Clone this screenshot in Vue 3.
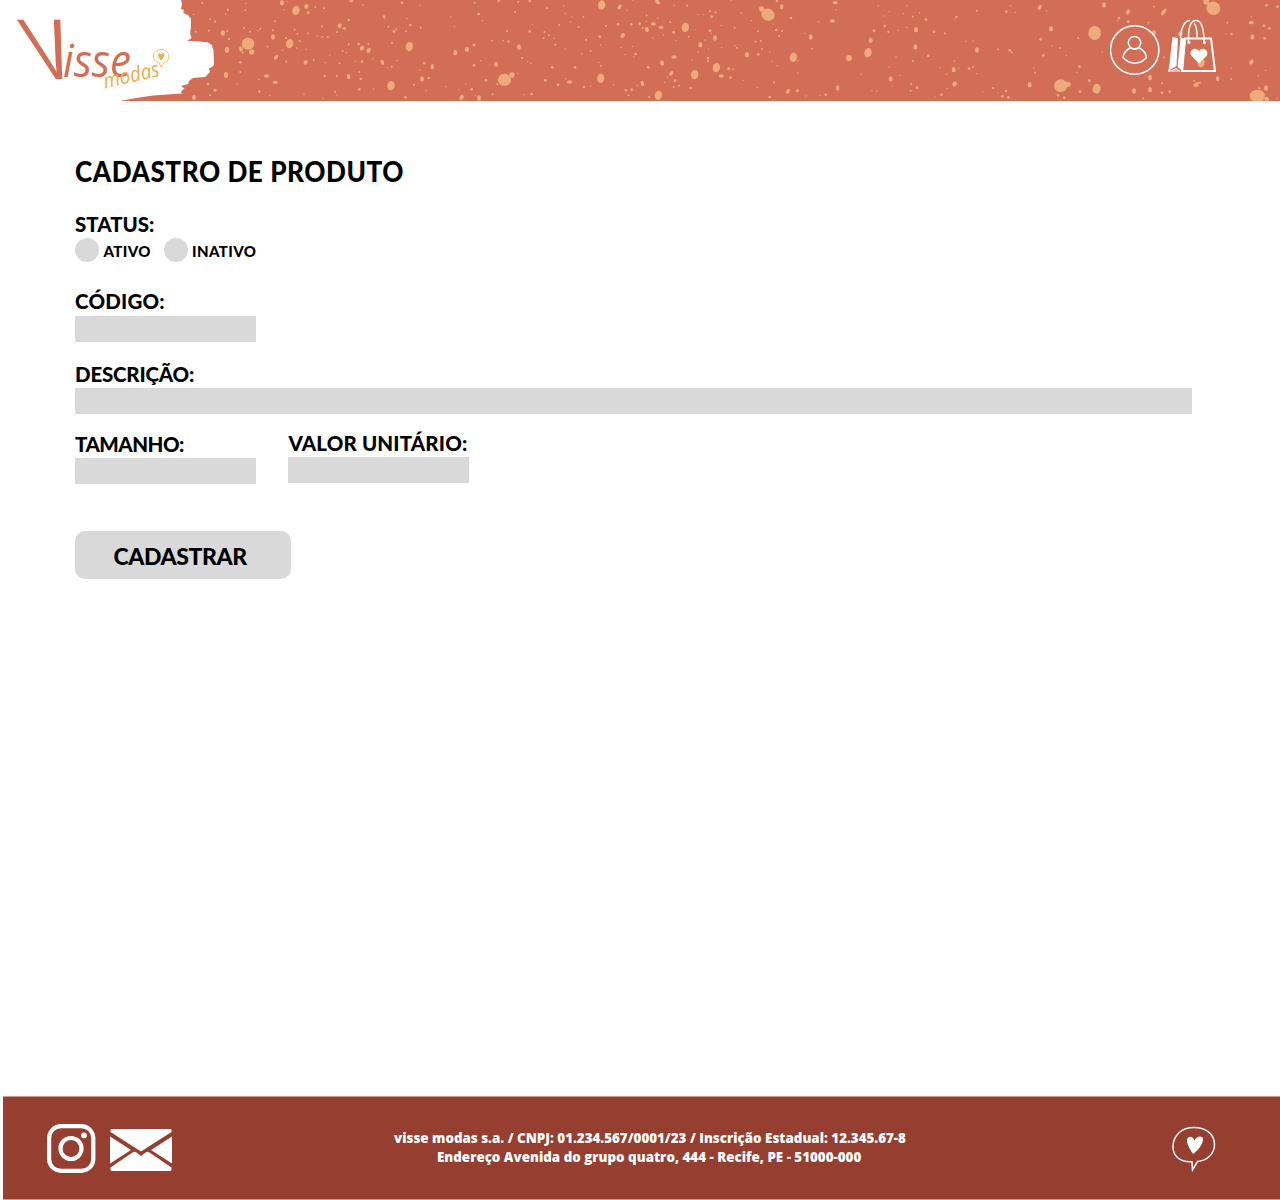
<script setup>
// Paint specks of the banner, one list per section: [x, y, rx, ry, tilt] in thirds of a pixel
const d = (list) => list.map(([x, y, rx, ry, t]) => ({ x, y, rx, ry: ry ?? rx, t: t ?? 0 }))
const sections = [
  { at: 0, dots: d([
    [607,9,3],[550,38,3],[581,43,2],[683,29,3],[677,43,2],[645,65,3],[631,57,2],[587,95,3],[572,97,2],[627,92,3],[669,99,6,8],[682,93,3],[687,117,3],[681,149,6,9],[678,225,6,9],[624,252,4],[645,271,4],[630,286,3],[582,292,6,8],
  ]) },
  { at: 210, dots: d([
    [216,8,6,8],[233,5,2],[108,10,2],[106,31,3],[53,29,3],[47,42,2],[222,29,2],[258,31,11,14,10],[289,19,6,8],[316,21,3],[295,38,4],[342,25,3],[424,2,6,5],[459,15,2],[576,8,4],[629,16,2],[794,8,3],[866,2,4],[15,64,3],[0,57,2],[195,64,3],[102,84,3],[120,95,3],[151,86,3],[144,92,2],[189,91,3],[38,99,6,8],[52,94,3],[57,117,3],[189,111,6,8],[228,114,3],[254,89,3],[262,102,3],[294,100,3],[336,79,3],[322,108,2],[337,111,3],[353,111,3],[389,77,6,7,30],[403,85,5,4],[381,96,3],[416,60,4],[522,50,4],[525,57,2],[535,80,3],[552,94,4],[559,88,3],[588,94,3],[601,75,4],[591,56,2],[632,83,3],[722,51,2],[733,80,2],[806,42,4],[817,62,2],[891,94,3],[846,122,3],[895,124,3],[879,122,2],[114,131,19,18],[125,156,8],[93,147,6,8],[98,158,3],[239,131,11,14,10],[269,123,3],[173,140,3],[218,150,2],[260,144,2],[288,148,2],[50,150,6,8],[91,187,4],[91,216,3],[198,172,5,8,40],[229,185,3],[287,187,6,7,35],[311,180,3],[346,188,2],[359,165,2],[389,190,3],[398,153,3],[409,158,2],[416,133,3],[446,132,4],[456,144,6,8,30],[476,151,6,8,30],[475,132,3],[546,129,3],[598,140,11,14,8],[736,158,6,8],[771,148,6,8],[792,135,5,4],[812,182,2],[792,196,4],[858,193,6,8],[436,184,2],[456,185,4],[488,176,2],[517,187,5,8,-20],[545,200,3],[532,203,2],[561,182,2],[643,190,4],[667,200,5,8],[630,210,2],[636,237,6,8],[656,234,4],[612,254,3],[648,272,2],[48,225,6,8],[170,228,8,5],[147,239,2],[196,247,8,5],[80,251,2],[15,271,4],[1,286,2],[148,275,4],[179,286,2],[282,282,2],[339,295,2],[344,228,4],[381,228,3],[375,275,3],[381,285,2],[416,230,5,8,-10],[448,216,3],[452,237,4],[448,268,4],[491,267,2],[543,257,11,14,8],[586,292,4],[708,260,2],[746,268,2],[755,292,6,8,30],[767,251,2],[785,268,4],[796,286,2],[807,294,6,8],[828,241,4],[862,253,3],[848,283,3],[883,239,19,18],
  ]) },
  { at: 500, dots: d([
    [55,6,3],[89,3,4],[141,25,3],[191,18,2],[45,36,3],[305,15,11,14,10],[359,21,5,8,35],[381,30,2],[471,4,6,5],[475,9,6,4],[398,0,2],[522,16,2],[561,17,3],[694,1,2],[196,40,2],[250,50,3],[217,51,2],[212,66,2],[236,81,3],[177,75,3],[97,74,2],[21,94,3],[89,94,4],[133,97,3],[147,106,3],[131,114,3],[162,115,2],[166,134,3],[9,122,2],[26,125,3],[57,141,6,8],[66,174,3],[83,185,2],[93,190,2],[195,147,2],[258,119,3],[299,110,4],[302,135,2],[318,78,3],[354,73,4],[394,73,4],[368,107,6,8,35],[419,71,4],[440,46,3],[440,64,2],[441,89,6,8,-15],[428,84,3],[460,72,8,5],[473,54,2],[483,82,8,5],[511,66,3],[521,97,4],[458,114,2],[490,105,2],[528,122,2],[556,82,11,14,10],[566,110,3],[586,89,2],[594,44,2],[610,43,2],[630,33,3],[647,37,3],[635,50,4],[664,76,2],[630,92,4],[634,100,2],[645,114,6,8],[615,120,2],[601,134,6,8],[724,39,2],[704,83,3],[754,62,2],[774,94,3],[785,27,8],[804,44,20,18,30],[831,3,4],[845,20,5,8],[873,54,4],[820,72,2],[829,90,4],[846,93,3],[837,108,3],[767,125,3],[783,123,3],[786,147,3],[705,137,2],[711,143,3],[665,142,2],[625,147,2],[594,156,2],[741,164,6,8],[775,163,4],[809,155,2],[816,184,2],[880,172,11,14,8],[832,197,2],[272,153,3],[245,162,2],[297,187,2],[303,198,3],[225,202,4],[157,202,4],[363,143,2],[397,139,2],[375,164,2],[407,162,4],[401,171,2],[522,171,8,5],[486,189,6,8,-15],[445,202,4],[576,180,2],[624,174,4],[624,183,3],[649,203,11,14,10],[686,206,4],[700,208,3],[664,228,8,5],[692,233,4],[729,242,2],[584,224,11,14,8],[514,220,5,8,40],[503,231,2],[525,242,4],[493,247,2],[521,261,3],[538,257,3],[572,264,4],[427,250,5,8,-15],[412,256,2],[395,269,4],[378,271,4],[385,286,3],[447,291,3],[475,286,11,14,8],[302,235,11,14,8],[341,254,2],[272,258,2],[252,261,4],[209,246,8,5],[197,236,2],[174,254,4],[136,241,4],[14,239,19,18],[36,225,8],[53,220,2],[72,284,2],[95,282,4],[822,247,3],[772,263,2],[864,274,5,8,30],[892,272,4],[809,291,4],
  ]) },
  { at: 790, dots: d([
    [136,8,8,5],[138,29,2],[265,18,2],[350,17,2],[298,35,2],[281,48,2],[340,41,2],[369,50,3],[389,38,2],[408,59,4],[499,51,4],[493,58,2],[561,32,3],[662,18,2],[649,35,4],[676,37,2],[749,22,5,8,35],[770,33,2],[127,63,8,5],[86,66,2],[44,100,2],[62,111,6,8],[66,146,3],[24,183,2],[177,174,9,9],[234,158,11,14,10],[242,121,6,8],[252,92,4],[284,78,4],[295,95,3],[324,91,2],[350,82,2],[378,89,6,8],[432,95,4],[465,100,3],[376,141,6,8],[415,167,4],[369,183,3],[318,171,2],[298,201,2],[213,223,2],[302,237,6,8],[307,257,2],[329,226,2],[363,252,3],[381,263,4],[362,272,3],[246,272,2],[260,273,2],[143,264,5,8],[107,284,4],[91,287,2],[48,288,2],[22,272,4],[24,219,2],[450,203,2],[470,222,2],[491,209,6,8],[506,204,2],[493,183,2],[494,252,6,8,35],[472,265,2],[454,284,4],[434,290,2],[537,206,4],[549,201,3],[560,221,2],[527,124,2],[549,123,2],[561,150,6,8],[624,148,3],[659,151,4],[665,157,3],[752,118,4],[783,86,6,8],[786,138,2],[760,166,4],[810,144,3],
    [731,204,2],[735,218,3],[719,254,6,8],[609,264,3],[578,275,2],[623,279,2],[637,289,4],[648,273,4],[655,292,4],[804,286,4],
  ]) },
  { at: 1060, dots: d([
    [132,15,6,8],[204,36,6,8,35],[177,54,4],[173,62,2],[205,65,4],[282,20,3],[311,36,5,12,35],[439,5,9],[460,25,21,20,35],[502,68,3],[55,114,3],[104,99,19,21,10],[127,156,2],[19,166,2],[58,200,4],[50,217,2],[88,242,4],[110,266,12,15,10],[60,275,4],[2,257,20,19],[24,253,8],[13,293,4],[222,273,6,8],[270,233,6,8],[270,269,6,8],[306,250,3],[306,278,4],[329,275,4],[250,295,3],[282,98,6,8],[265,68,3],[312,172,3],[408,255,8,6],[416,248,7,3],[402,242,3],[473,236,5,8],[513,237,3],[515,205,2],[498,101,2],[514,102,4],[361,102,7],[423,188,11,14],[574,51,2],[574,68,8,5],[612,77,4],[628,85,4],[620,16,4],[652,20,4],[577,111,6,8],[614,115,4],[574,186,6,8,35],[617,211,2],[595,227,2],[592,288,23,19],[620,297,7],[618,264,6,8],[598,265,3],[652,295,2],
  ]) },
]
</script>

<template>
  <div class="page">
    <header class="banner">
      <svg class="art" viewBox="0 0 1280 101" width="1280" height="101">
        <g v-for="s in sections" :key="s.at" :transform="`translate(${s.at} 0) scale(.33333)`" fill="#edab7b">
          <ellipse v-for="(p, i) in s.dots" :key="i" :cx="p.x" :cy="p.y" :rx="p.rx" :ry="p.ry" :transform="`rotate(${p.t} ${p.x} ${p.y})`" />
        </g>
        <path fill="#fff" d="M0 0H181L182 4 181 9 184 10 183 13 188 15 191 19V27L190 33 191.500 38 187 41 200 41.500 208 42.500 212 45 212.500 48 213.500 50 214 65 212 67 209 68.500 210 72 205 77 193 78 189 81 188 84 181 86 184.500 88.500 181 91.500 182 93.500 153 95.500 133 98.500 120 101H0Z" />
      </svg>
      <svg class="logo" viewBox="0 0 200 100" width="200" height="100" role="img" aria-label="Visse modas">
        <text class="initial" transform="translate(37 79) skewX(19)" textLength="44" lengthAdjust="spacingAndGlyphs">V</text>
        <text class="word" transform="translate(63 77)" textLength="68" lengthAdjust="spacingAndGlyphs">isse</text>
        <text class="sub" transform="translate(105 88.500) rotate(-13)" textLength="57" lengthAdjust="spacingAndGlyphs">modas</text>
        <g fill="none" stroke="#efae4c" stroke-width=".8">
          <path d="M159.500 63C151 61 151 50 161 49.500 171 50 171 61 163.500 63L161 67Z" />
          <path d="M161 60Q157.500 55.500 158.500 54 160 52.500 161 55 163 52 164 54 164.500 56 161 60Z" fill="#efae4c" />
        </g>
      </svg>
      <nav class="actions">
        <svg width="50" height="50" viewBox="0 0 50 50" fill="none" stroke="#fff" stroke-width="1.500">
          <circle cx="24.700" cy="25" r="24.200" />
          <circle cx="24.500" cy="17.600" r="6.200" />
          <path d="M20 23C16 25 13.500 29 13 32.500 20 40 30 40 36.500 32.500 36 29 33 25 29.500 23 26 24.300 23 24.300 20 23Z" />
        </svg>
        <svg class="bag" width="50" height="55" viewBox="0 0 50 55">
          <path fill="#fff" d="M4.500 18 10 19 8.500 47 0 52 1 49ZM12.500 19H18L14.500 52 9.500 48ZM0 53 8 49 13 53 8 50.500Z" />
          <g fill="none" stroke="#fff" stroke-width="1.700">
            <path d="M17 19.500H43L47 52H14.200Z" stroke-width="2" />
            <path d="M12.500 19C13 8 17 1.500 22 1.500M20.500 24V18C20.500 7 23 1.500 28 1.500 33 1.500 36 8 36 23M26 4C28.500 6 29 12 29 18" stroke-width="1.500" />
            <path d="M0 52H12" stroke-width="1" />
          </g>
          <circle cx="21" cy="23.500" r="1.500" fill="#fff" /><circle cx="36.500" cy="23.500" r="1.500" fill="#fff" />
          <path fill="#fff" d="M31 44.500 23.500 37C20 32 27 26.500 31 32 35 26.500 42 32 38.500 37Z" />
        </svg>
      </nav>
    </header>

    <main>
      <h1>CADASTRO DE PRODUTO</h1>
      <section class="status">
        <h2 class="s1">STATUS:</h2>
        <div class="options">
          <label><i class="dot"></i><span class="o1">ATIVO</span></label>
          <label><i class="dot"></i><span class="o2">INATIVO</span></label>
        </div>
      </section>
      <section class="code"><h2 class="s2">CÓDIGO:</h2><div class="field"></div></section>
      <section class="desc"><h2 class="s3">DESCRIÇÃO:</h2><div class="field wide"></div></section>
      <div class="row">
        <section><h2 class="s4">TAMANHO:</h2><div class="field"></div></section>
        <section class="price"><h2 class="s5">VALOR UNITÁRIO:</h2><div class="field"></div></section>
      </div>
      <button>CADASTRAR</button>
    </main>

    <footer>
      <div class="social">
        <svg width="49" height="49" viewBox="0 0 49 49" fill="none" stroke="#fff">
          <rect x="2.100" y="2.100" width="44.200" height="44.800" rx="12" stroke-width="4.200" />
          <circle cx="24" cy="24.500" r="10.500" stroke-width="4.200" />
          <circle cx="37" cy="11.400" r="2.900" fill="#fff" stroke="none" />
        </svg>
        <svg width="62" height="42" viewBox="0 0 62 42" fill="#fff">
          <path d="M1 0H61Q62 1 61.500 3L31 22.500.5 3Q0 1 1 0ZM0 7.500 21 21 0 34.500ZM62 7.500V34.500L41 21ZM.5 38.500 22.500 23.500Q25 22 27 24L31 27 35 24Q37 22 39.500 23.500L61.500 38.500Q62 42 60 42H2Q0 42 .5 38.500Z" />
        </svg>
      </div>
      <address>
        <p class="l1">visse modas s.a. / CNPJ: 01.234.567/0001/23 / Inscrição Estadual: 12.345.67-8</p>
        <p class="l2">Endereço Avenida do grupo quatro, 444 - Recife, PE - 51000-000</p>
      </address>
      <svg class="chat" width="44" height="46" viewBox="0 0 44 46">
        <path fill="none" stroke="#fff" stroke-width="1.500" d="M20 35.700C8 36.500 1 30 1 21 1 9 10 1.500 22 1.500 34 1.500 42.500 8 42.500 18.500 42.500 28 35 34.500 25.500 35.500L20.500 44Z" />
        <path fill="#fff" d="M21 28C18 23 14.500 18 15 13.500 16 9.500 21 10 22.500 14.500 24.500 10 30 9 31 12.500 31.500 18 25.500 25 21 28Z" />
      </svg>
    </footer>
  </div>
</template>

<style>
body { background: #fff; }
</style>

<style scoped>
.page { width: 1280px; height: 1200px; display: flex; flex-direction: column; overflow: hidden; font-family: Lato, sans-serif; color: #000; }
.banner { position: relative; flex: none; height: 101px; background: #d16e55; display: flex; justify-content: space-between; }
.art { position: absolute; inset: 0; }
.logo { position: relative; flex: none; overflow: visible; }
.logo text { font-family: "Open Sans", sans-serif; font-style: italic; fill: #d16e55; }
.logo .initial { font-family: "Liberation Sans", sans-serif; font-style: normal; font-size: 86px; }
.logo .word { font-size: 46px; font-weight: 500; }
.logo .sub { font-size: 21px; fill: #efae4c; font-weight: 500; }
.actions { position: relative; display: flex; gap: 8px; align-items: flex-start; padding: 25px 62px 0 0; }
.bag { margin-top: -6px; }
main { flex: 1; padding: 52px 0 0 75px; }
h1, h2, p { margin: 0; }
h1 { font-size: 28.500px; line-height: 36px; font-weight: 900; letter-spacing: .6px; white-space: nowrap; transform: scaleX(.917); transform-origin: 0 0; }
h2 { font-size: 20.500px; line-height: 24px; font-weight: 900; white-space: nowrap; }
.s2 { letter-spacing: .2px; }
.s3 { letter-spacing: -.2px; }
.s4 { letter-spacing: -.5px; }
.s5 { letter-spacing: .15px; }
.status { margin-top: 23px; height: 50px; }
.options { display: flex; margin-top: 2px; }
.options label { display: flex; width: 88.500px; font-size: 15px; line-height: 24px; font-weight: 900; letter-spacing: .4px; }
.dot { width: 24px; height: 24px; border-radius: 50%; background: #d9d9d9; margin-right: 4.500px; flex: none; }
.options span { padding-top: 1px; }
.field { width: 181px; height: 26px; margin-top: 2.500px; background: #d9d9d9; }
.wide { width: 1117px; }
.code { margin-top: 27px; }
.code .field { margin-top: 3px; }
.desc { margin-top: 19.500px; }
.row { display: flex; gap: 32.400px; margin-top: 18px; }
.row .field { margin-top: 2px; }
.price { margin-top: -1px; }
button { display: block; width: 216px; height: 48px; margin-top: 47px; padding: 2px 0 0 38.500px; border: 0; border-radius: 10px; background: #d9d9d9; color: #000; text-align: left; letter-spacing: -.4px; font: 900 23px/44px Lato, sans-serif; }
footer { flex: none; box-sizing: border-box; height: 104px; margin-left: 3px; background: #963e2f; border: solid #cb9f97; border-width: 1px 0; display: flex; align-items: flex-start; color: #fff; }
.social { display: flex; width: 391px; box-sizing: border-box; padding: 27px 0 0 43.500px; gap: 14.500px; }
.social svg + svg { margin-top: 4.500px; }
address { width: 512px; padding-top: 32px; font: normal 800 13.370px/19px "Open Sans", sans-serif; white-space: nowrap; }
.l2 { padding-left: 43px; }
.chat { margin: 29px 0 0 266px; }
</style>
